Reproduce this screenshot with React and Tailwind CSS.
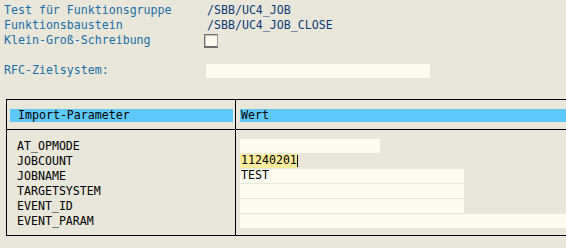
export default function App() {
  const rows = [
    { name: 'AT_OPMODE', w: 'w-[140px]' },
    { name: 'JOBCOUNT', value: '11240201', active: true },
    { name: 'JOBNAME', value: 'TEST', w: 'w-[224px]' },
    { name: 'TARGETSYSTEM', w: 'w-[224px]' },
    { name: 'EVENT_ID', w: 'w-[224px]' },
    { name: 'EVENT_PARAM', w: 'w-[340px]' },
  ]

  return (
    <div
      className="w-[566px] h-[248px] overflow-hidden bg-[#E9E7D9] text-[11.6px] leading-none"
      style={{ fontFamily: '"DejaVu Sans Mono", "Liberation Mono", monospace' }}
    >
      {/* Header info */}
      <div className="pl-[4px] pt-[3px]">
        <div className="flex h-[15px] items-center">
          <span className="w-[203px] text-[#1A6EA8]">Test für Funktionsgruppe</span>
          <span className="text-[#0D3C78]">/SBB/UC4_JOB</span>
        </div>
        <div className="flex h-[15px] items-center">
          <span className="w-[203px] text-[#1A6EA8]">Funktionsbaustein</span>
          <span className="text-[#0D3C78]">/SBB/UC4_JOB_CLOSE</span>
        </div>
        <div className="flex h-[15px] items-center">
          <span className="w-[200px] text-[#1A6EA8]">Klein-Groß-Schreibung</span>
          <span className="w-[14px] h-[14px] bg-[#FBFBEE] border border-[#6E6E6E] border-r-[#9A9A9A] border-b-2 shadow-[inset_1px_1px_0_#C8C8C0]" />
        </div>
        <div className="flex h-[14px] items-center mt-[16px]">
          <span className="w-[202px] text-[#1A6EA8]">RFC-Zielsystem:</span>
          <span className="w-[224px] h-[14px] bg-[#FBFBEE]" />
        </div>
      </div>

      {/* Parameter table */}
      <div className="ml-[6px] mt-[21px] w-[640px] border border-black">
        <div className="flex h-[30px] border-b border-black">
          <div className="w-[229px] shrink-0 border-r border-black pl-[3px] pr-[2px] pt-[9px]">
            <div className="h-[13px] bg-[#5EC8FA] pl-[8px] flex items-center text-black">Import-Parameter</div>
          </div>
          <div className="flex-1 pl-[4px] pt-[9px]">
            <div className="h-[13px] bg-[#5EC8FA] pl-[1px] flex items-center text-black">Wert</div>
          </div>
        </div>
        <div className="flex">
          <div className="w-[229px] shrink-0 border-r border-black pt-[9px] pb-[6px] pl-[10px]">
            {rows.map((r) => (
              <div key={r.name} className="h-[15px] flex items-center text-black">
                {r.name}
              </div>
            ))}
          </div>
          <div className="flex-1 pt-[9px] pb-[6px] pl-[4px] flex flex-col gap-[1px]">
            {rows.map((r) =>
              r.active ? (
                <div key={r.name} className="h-[14px] flex items-center">
                  <span className="h-[14px] bg-[#FBEB9C] flex items-center text-black pl-[1px]">{r.value}</span>
                  <span className="w-[1px] h-[12px] bg-black" />
                </div>
              ) : (
                <div key={r.name} className={`${r.w} h-[14px] bg-[#FBFBEE] flex items-center text-black pl-[1px]`}>
                  {r.value}
                </div>
              )
            )}
          </div>
        </div>
      </div>
    </div>
  )
}
